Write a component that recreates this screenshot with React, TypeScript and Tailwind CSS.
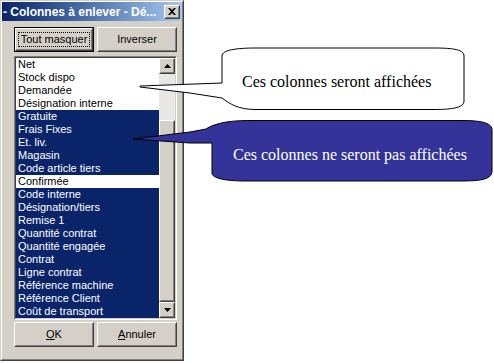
import React from 'react';

const ITEMS: { label: string; selected: boolean }[] = [
  { label: 'Net', selected: false },
  { label: 'Stock dispo', selected: false },
  { label: 'Demandée', selected: false },
  { label: 'Désignation interne', selected: false },
  { label: 'Gratuite', selected: true },
  { label: 'Frais Fixes', selected: true },
  { label: 'Et. liv.', selected: true },
  { label: 'Magasin', selected: true },
  { label: 'Code article tiers', selected: true },
  { label: 'Confirmée', selected: false },
  { label: 'Code interne', selected: true },
  { label: 'Désignation/tiers', selected: true },
  { label: 'Remise 1', selected: true },
  { label: 'Quantité contrat', selected: true },
  { label: 'Quantité engagée', selected: true },
  { label: 'Contrat', selected: true },
  { label: 'Ligne contrat', selected: true },
  { label: 'Référence machine', selected: true },
  { label: 'Référence Client', selected: true },
  { label: 'Coût de transport', selected: true },
];

/** Raised Win2000-style bevel */
const Raised: React.FC<{ className?: string; children?: React.ReactNode }> = ({ className = '', children }) => (
  <div className={`border border-t-white border-l-white border-r-[#404040] border-b-[#404040] bg-[#d4d0c8] ${className}`}>
    <div className="h-full w-full border border-t-[#d4d0c8] border-l-[#d4d0c8] border-r-[#808080] border-b-[#808080] flex items-center justify-center">
      {children}
    </div>
  </div>
);

const Arrow: React.FC<{ up?: boolean }> = ({ up }) => (
  <svg width="7" height="4" viewBox="0 0 7 4">
    {up ? <path d="M3.5 0 L7 4 L0 4 Z" fill="#000" /> : <path d="M0 0 L7 0 L3.5 4 Z" fill="#000" />}
  </svg>
);

export default function App() {
  return (
    <div className="relative w-[494px] h-[363px] bg-white overflow-hidden" style={{ fontFamily: '"Liberation Sans", Arial, sans-serif' }}>
      {/* Dialog window */}
      <div className="w-[184px] h-[361px] border border-t-[#d4d0c8] border-l-[#d4d0c8] border-r-[#404040] border-b-[#404040] bg-[#d4d0c8]">
        <div className="h-full border border-t-white border-l-white border-r-[#808080] border-b-[#808080] flex flex-col">
          {/* Title bar */}
          <div className="h-[19px] bg-gradient-to-r from-[#0a246a] to-[#a6caf0] flex items-center justify-between pl-[1px] pr-[2px]">
            <span className="text-white font-bold text-[12px] leading-none whitespace-nowrap">- Colonnes à enlever - Dé...</span>
            <Raised className="w-[16px] h-[14px]">
              <svg width="8" height="7" viewBox="0 0 8 7">
                <path d="M0 0 L2 0 L4 2 L6 0 L8 0 L5 3.5 L8 7 L6 7 L4 5 L2 7 L0 7 L3 3.5 Z" fill="#000" />
              </svg>
            </Raised>
          </div>

          <div className="pl-[12px] pt-[6px] text-[11px] text-black">
            {/* Top buttons */}
            <div className="flex gap-[3px]">
              <div className="w-[80px] h-[25px] border border-black">
                <Raised className="h-full">
                  <span className="px-[2px] leading-[13px] outline outline-1 outline-dotted outline-black">Tout masquer</span>
                </Raised>
              </div>
              <Raised className="w-[80px] h-[25px]">
                <span>Inverser</span>
              </Raised>
            </div>

            {/* List box */}
            <div className="mt-[4px] w-[163px] h-[264px] border border-t-[#808080] border-l-[#808080] border-r-white border-b-white">
              <div className="h-full border border-t-[#404040] border-l-[#404040] border-r-[#d4d0c8] border-b-[#d4d0c8] flex">
                <div className="flex-1 bg-white">
                  {ITEMS.map((it) => (
                    <div
                      key={it.label}
                      className={`h-[13px] leading-[13px] pl-[2px] whitespace-nowrap ${it.selected ? 'bg-[#0a246a] text-white' : 'text-black'}`}
                    >
                      {it.label}
                    </div>
                  ))}
                </div>
                {/* Scrollbar */}
                <div className="w-[16px] flex flex-col bg-[#eae8e4]">
                  <Raised className="h-[16px]">
                    <Arrow up />
                  </Raised>
                  <div className="h-[46px]" />
                  <Raised className="flex-1" />
                  <Raised className="h-[16px]">
                    <Arrow />
                  </Raised>
                </div>
              </div>
            </div>

            {/* Bottom buttons */}
            <div className="flex gap-[3px] mt-[2px]">
              <Raised className="w-[80px] h-[25px]">
                <span>
                  <span className="underline">O</span>K
                </span>
              </Raised>
              <Raised className="w-[80px] h-[25px]">
                <span>
                  <span className="underline">A</span>nnuler
                </span>
              </Raised>
            </div>
          </div>
        </div>
      </div>

      {/* Callouts */}
      <svg className="absolute left-0 top-0 pointer-events-none" width="494" height="363" viewBox="0 0 494 363">
        <path
          d="M140 86 L222 83 L222 56 C222 50 236 48 256 48 L434 48 C455 48 464 50 464 56 L464 101 C464 107 455 109.5 434 109.5 L256 109.5 C238 109.5 230 104 222 98 L190 93 L140 87 Z"
          fill="#fff"
          stroke="#000"
          strokeWidth="1"
        />
        <path
          d="M133 139 L190 132 L206 129 C214 124 226 120.5 250 120.5 L462 120.5 C485 120.5 492 124 492 130 L492 171 C492 178 485 181 462 181 L246 181 C224 181 212 178 212 173 L212 143 L190 143 Z"
          fill="#333399"
          stroke="#000"
          strokeWidth="1"
        />
      </svg>
      <div className="absolute left-[242px] top-[74px] text-[16px] leading-none text-black whitespace-nowrap" style={{ fontFamily: '"Liberation Serif", "Times New Roman", serif' }}>
        Ces colonnes seront affichées
      </div>
      <div className="absolute left-[233px] top-[147px] text-[16px] leading-none text-white whitespace-nowrap" style={{ fontFamily: '"Liberation Serif", "Times New Roman", serif' }}>
        Ces colonnes ne seront pas affichées
      </div>
    </div>
  );
}
